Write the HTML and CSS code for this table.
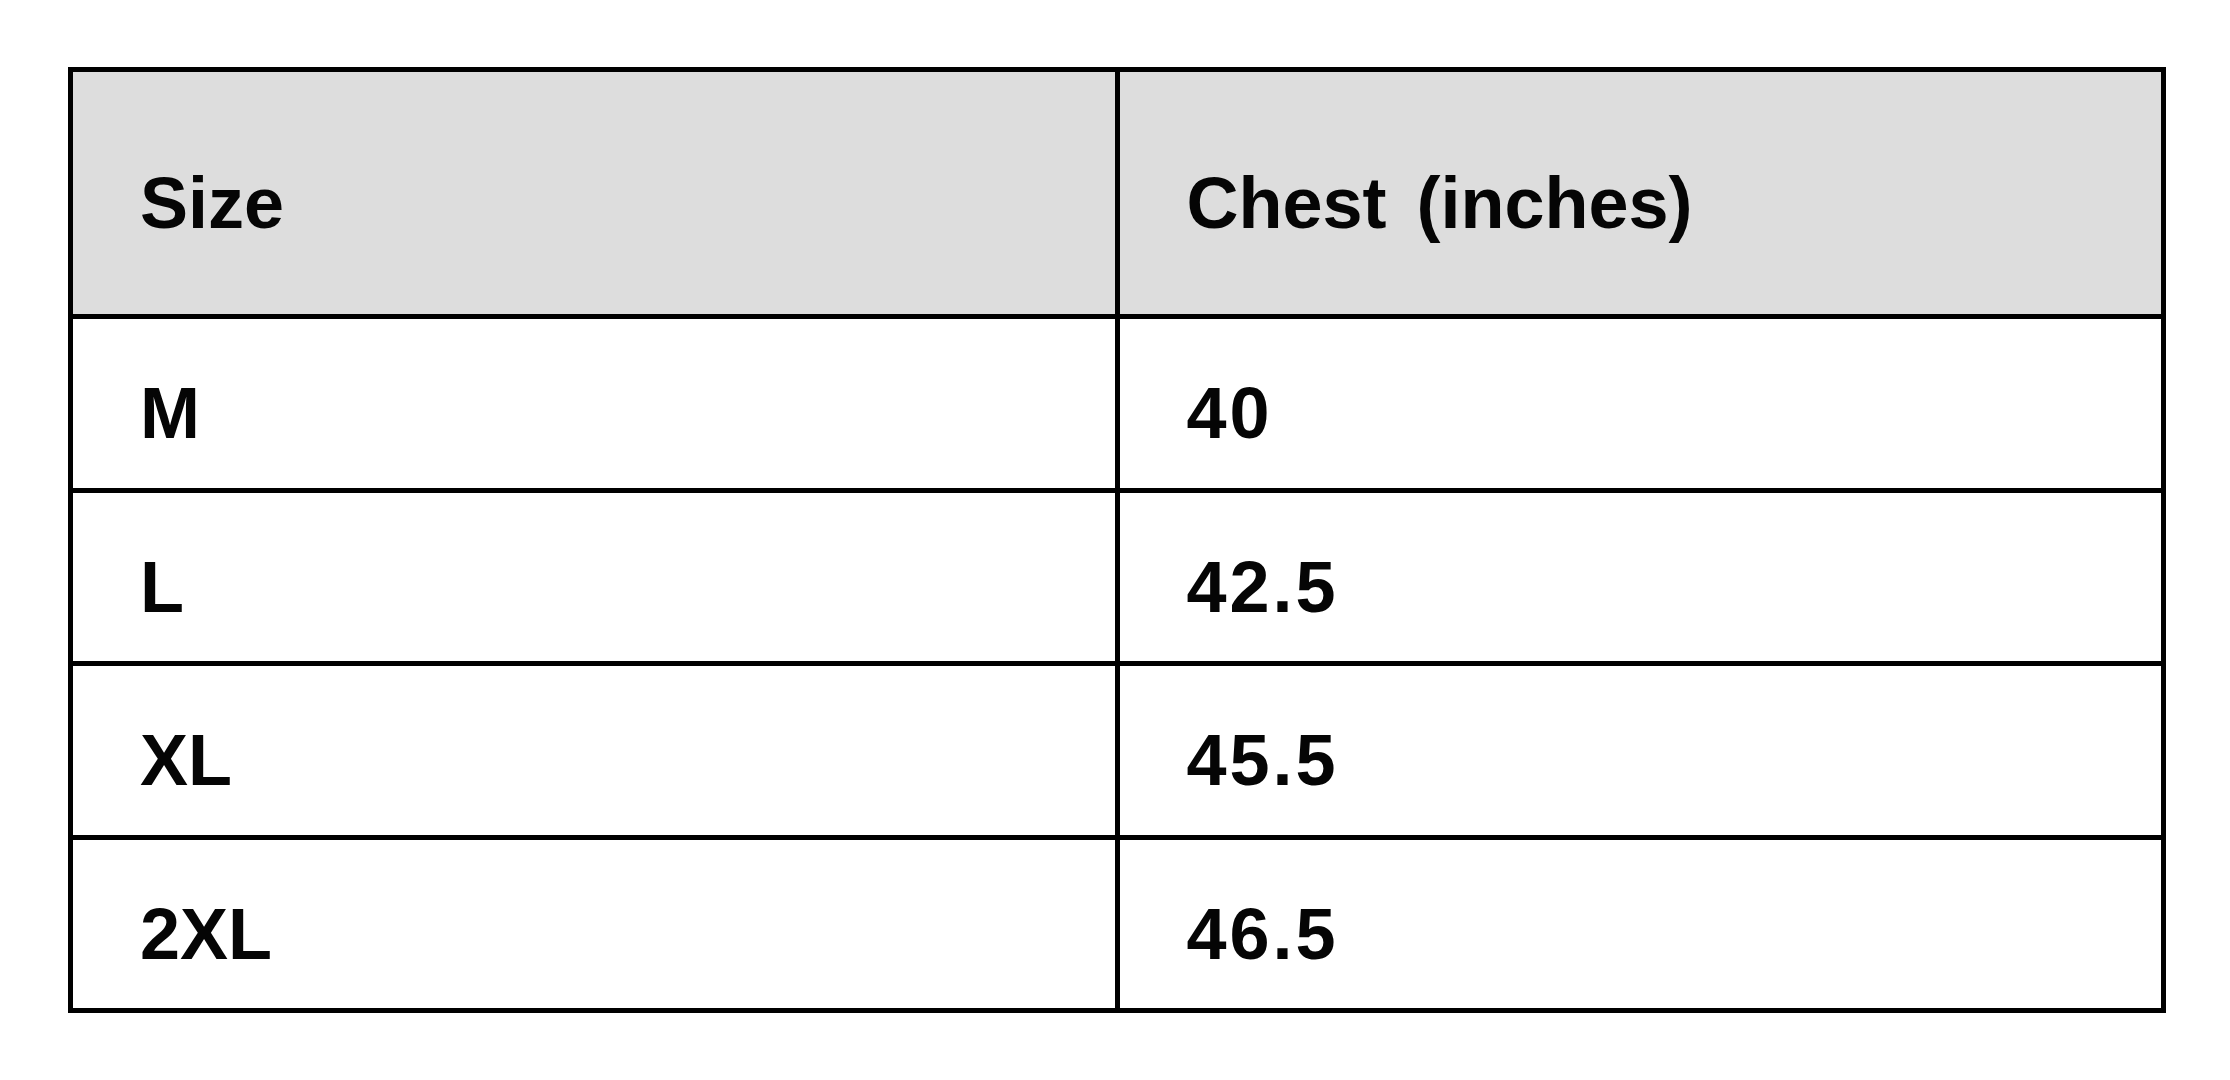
FILE: index.html
```html
<!DOCTYPE html>
<html lang="en">
<head>
<meta charset="utf-8">
<title>Size chart</title>
<link rel="stylesheet" href="styles.css">
</head>
<body>
<table class="size-table">
  <thead>
    <tr class="head-row">
      <th class="cell">Size</th>
      <th class="cell wide-gap">Chest (inches)</th>
    </tr>
  </thead>
  <tbody>
    <tr class="data-row"><td class="cell">M</td><td class="cell num">40</td></tr>
    <tr class="data-row"><td class="cell">L</td><td class="cell num">42.5</td></tr>
    <tr class="data-row"><td class="cell">XL</td><td class="cell num">45.5</td></tr>
    <tr class="data-row"><td class="cell">2XL</td><td class="cell num">46.5</td></tr>
  </tbody>
</table>
</body>
</html>
```
FILE: styles.css
```css
html, body {
  margin: 0;
  padding: 0;
  background: #ffffff;
}

body {
  width: 2230px;
  height: 1080px;
  overflow: hidden;
  font-family: "Liberation Sans", Arial, sans-serif;
  color: #050505;
}

.size-table {
  margin: 67px 0 0 68px;
  width: 2098px;
  border-collapse: collapse;
  border: 5px solid #000;
  table-layout: fixed;
}

.cell {
  box-sizing: border-box;
  border: 5px solid #000;
  text-align: left;
  vertical-align: middle;
  font-size: 72px;
  font-weight: 700;
  line-height: 1;
  padding: 20px 20px 0 67px;
  width: 50%;
}

.wide-gap {
  word-spacing: 10px;
}

.num {
  letter-spacing: 3px;
}

.head-row .cell {
  background: #dddddd;
  height: 247px;
}

.data-row .cell {
  height: 173.5px;
}
```
